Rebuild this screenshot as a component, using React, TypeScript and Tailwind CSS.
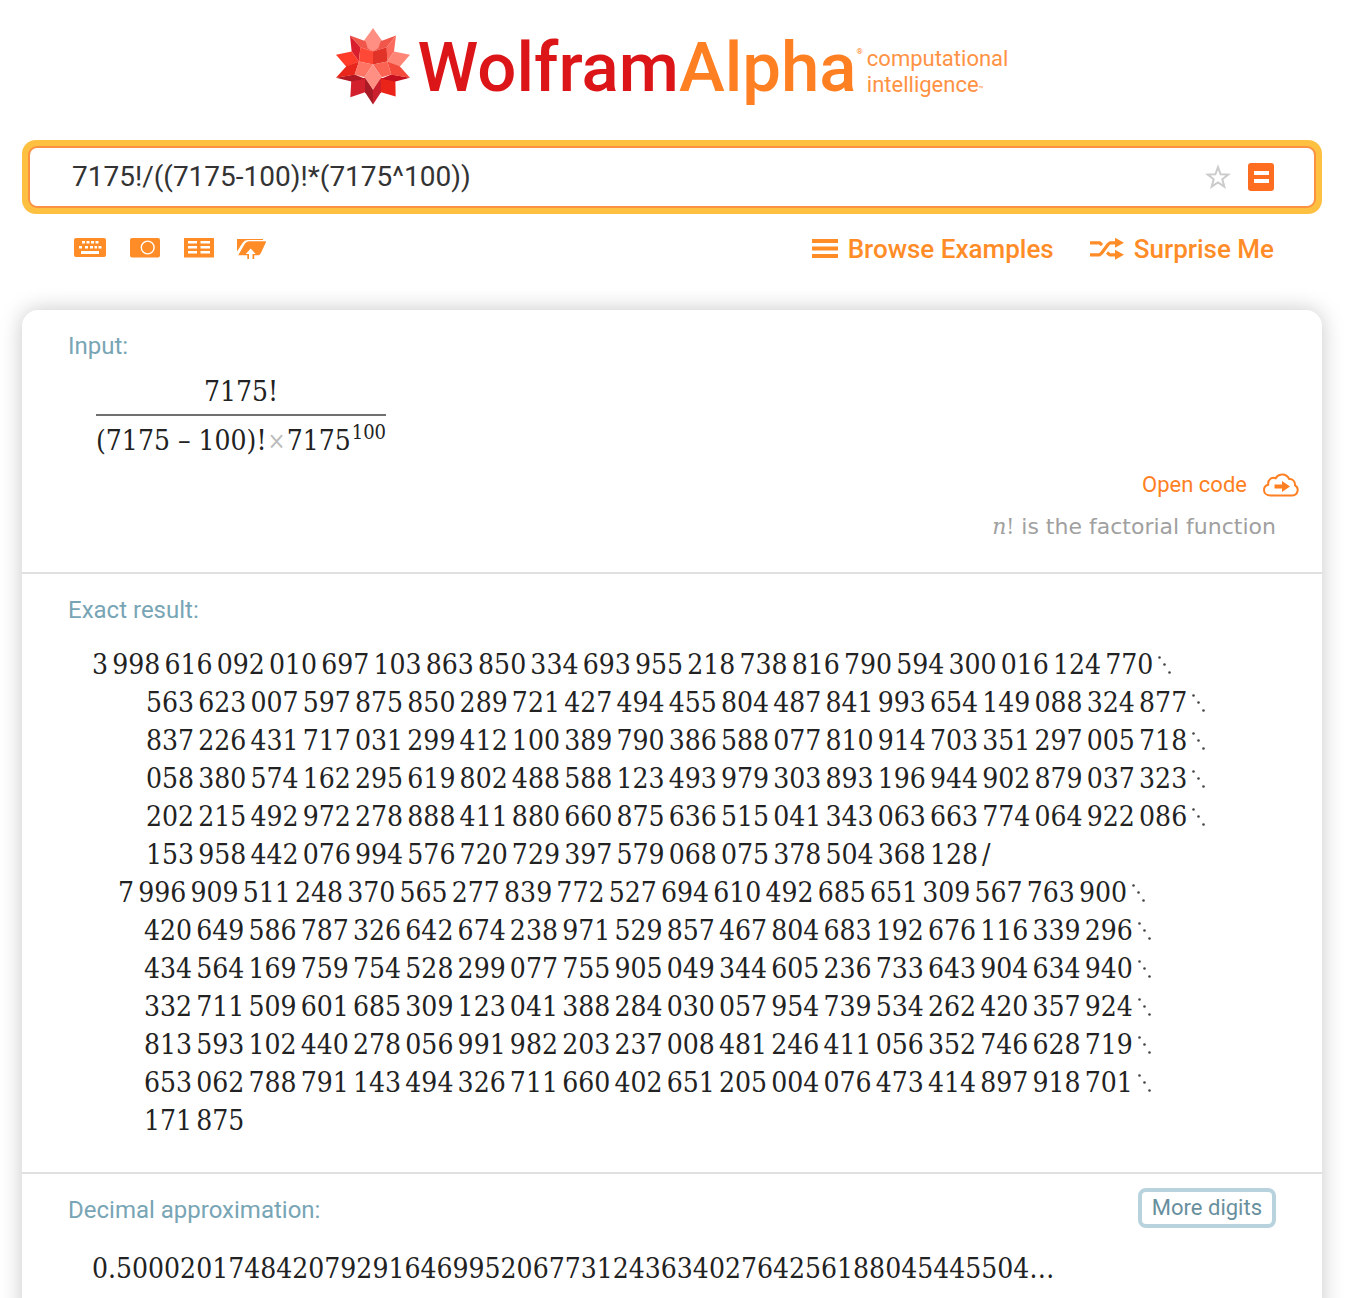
import type { ReactNode } from "react";

const NUMERATOR = [
  "3 998 616 092 010 697 103 863 850 334 693 955 218 738 816 790 594 300 016 124 770",
  "563 623 007 597 875 850 289 721 427 494 455 804 487 841 993 654 149 088 324 877",
  "837 226 431 717 031 299 412 100 389 790 386 588 077 810 914 703 351 297 005 718",
  "058 380 574 162 295 619 802 488 588 123 493 979 303 893 196 944 902 879 037 323",
  "202 215 492 972 278 888 411 880 660 875 636 515 041 343 063 663 774 064 922 086",
  "153 958 442 076 994 576 720 729 397 579 068 075 378 504 368 128",
];

const DENOMINATOR = [
  "7 996 909 511 248 370 565 277 839 772 527 694 610 492 685 651 309 567 763 900",
  "420 649 586 787 326 642 674 238 971 529 857 467 804 683 192 676 116 339 296",
  "434 564 169 759 754 528 299 077 755 905 049 344 605 236 733 643 904 634 940",
  "332 711 509 601 685 309 123 041 388 284 030 057 954 739 534 262 420 357 924",
  "813 593 102 440 278 056 991 982 203 237 008 481 246 411 056 352 746 628 719",
  "653 062 788 791 143 494 326 711 660 402 651 205 004 076 473 414 897 918 701",
  "171 875",
];

const MATH = "font-['DejaVu_Serif_Condensed','DejaVu_Serif',serif] text-[28px] leading-[38px] text-[#222]";

/* Digit groups are set apart by a six-per-em space. */
const grouped = (line: string) => line.replace(/ /g, "\u2006");

function Spikey() {
  return (
    <svg viewBox="48 38 222 230" className="h-[77px] w-[74px] shrink-0" aria-hidden="true">
      <polygon points="159,38 188,78 159,110 130,78" fill="#ff8f83" />
      <polygon points="90,60 137,77 159,108 121,95" fill="#f0564a" />
      <polygon points="90,60 121,95 117,138 95,108" fill="#d91f2d" />
      <polygon points="228,60 182,77 159,108 200,95" fill="#f0564a" />
      <polygon points="228,60 200,95 202,138 222,108" fill="#fb6a5c" />
      <polygon points="159,38 137,77 143,98 159,108 175,98 182,77" fill="#ff8f83" />
      <polygon points="48,118 95,108 117,138 79,154" fill="#ff3b29" />
      <polygon points="270,118 222,108 202,138 239,154" fill="#ff8676" />
      <polygon points="121,95 159,108 159,147 117,138" fill="#ff4836" />
      <polygon points="200,95 159,108 159,147 202,138" fill="#e23328" />
      <polygon points="94,193 135,187 135,230 91,245" fill="#d3202d" />
      <polygon points="226,193 183,187 183,230 227,243" fill="#ea2419" />
      <polygon points="135,184 159,222 159,267 135,230" fill="#a81a26" />
      <polygon points="183,184 159,222 159,267 183,230" fill="#cb1f2e" />
      <polygon points="48,187 104,177 135,190 94,198" fill="#b01823" />
      <polygon points="270,187 214,177 183,190 226,198" fill="#c4101f" />
      <polygon points="48,187 79,152 117,138 104,178" fill="#e9261b" />
      <polygon points="270,187 239,152 202,138 214,178" fill="#f44a3b" />
      <polygon points="117,138 159,147 133,185 104,177" fill="#ff7565" />
      <polygon points="202,138 159,147 185,185 214,177" fill="#fb6353" />
      <polygon points="159,147 133,185 159,222 185,185" fill="#ff8f83" />
    </svg>
  );
}

function Logo() {
  return (
    <a href="#home" className="flex items-start justify-center pt-7">
      <Spikey />
      <span className="ml-2 text-[69px] leading-[80px] font-medium text-[#dc1518]">Wolfram</span>
      <span className="text-[69px] leading-[80px] font-medium text-[#ff7f23]">Alpha</span>
      <span className="mt-4 text-[8px] leading-4 text-[#ff7f23]">®</span>
      <span className="mt-[18px] ml-1 text-[22px] leading-[26px] text-[#ff9243]">
        computational
        <br />
        intelligence<span className="text-[8px]">™</span>
      </span>
    </a>
  );
}

function SearchBox() {
  return (
    <form className="mt-8 rounded-[14px] bg-[#fdc040] p-1.5">
      <div className="flex h-[62px] items-center rounded-[9px] border-2 border-[#fd9142] bg-white pr-10 pl-[42px]">
        <input
          type="text"
          aria-label="Query"
          defaultValue="7175!/((7175-100)!*(7175^100))"
          className="min-w-0 flex-1 bg-transparent text-[28px] leading-9 text-[#333] outline-none"
        />
        <button type="button" aria-label="Add to favorites">
          <svg viewBox="0 0 26 26" className="size-[26px]" fill="none" stroke="#cbcbcb" strokeWidth="2">
            <path d="M13 3.2l2.6 7.1 7.6.3-5.9 4.700 2 7.300L13 18.400l-6.300 4.200 2-7.300L2.800 10.600l7.600-.3z" />
          </svg>
        </button>
        <button type="submit" aria-label="Compute" className="ml-[17px]">
          <svg viewBox="0 0 26 28" className="h-7 w-[26px]">
            <rect width="26" height="28" rx="3" fill="#ff6d20" />
            <path d="M6 8h15v4H6zM6 16h15v4H6z" fill="#fff" />
          </svg>
        </button>
      </div>
    </form>
  );
}

function KeyboardIcon() {
  return (
    <svg viewBox="0 0 32 20" className="h-5 w-8">
      <rect width="32" height="19" rx="2" fill="#ff8c27" />
      <path
        d="M8 3h3v2.500H8zM12.500 3h3v2.500h-3zM17 3h3v2.500h-3zM21.500 3h3v2.500h-3zM5 8h3v2.500H5zM11 8h3v2.500h-3zM16 8h3v2.500h-3zM20.500 8h2.500v2.500h-2.500zM24.500 8h3v2.500h-3zM7 13h18v3H7z"
        fill="#fff"
      />
    </svg>
  );
}

function CameraIcon() {
  return (
    <svg viewBox="0 0 30 20" className="h-5 w-[30px]">
      <rect width="30" height="19.500" rx="2" fill="#ff8c27" />
      <circle cx="17.700" cy="9.500" r="6.400" fill="none" stroke="#fff" strokeWidth="1.400" />
    </svg>
  );
}

function TableIcon() {
  return (
    <svg viewBox="0 0 30 20" className="h-5 w-[30px]">
      <rect width="30" height="19.500" fill="#ff8c27" />
      <path d="M4 3h9v2.500H4zM4 8h9v2.500H4zM4 13h9v2.500H4zM16.500 3h9.500v2.500h-9.500zM16.500 8h9.500v2.500h-9.500zM16.500 13h9.500v2.500h-9.500z" fill="#fff" />
    </svg>
  );
}

function UploadIcon() {
  return (
    <svg viewBox="0 0 30 22" className="h-[22px] w-[30px]">
      <path d="M0 2h26v1H10.500Q7.500 3 5.500 6L0 14.500z" fill="#ff8c27" />
      <path d="M12 4.300h16.200q1.200 0 .6 1.300l-5 10.700q-.9 1.900-2.800 1.900H1.200L7.800 6.800q1.400-2.500 4.200-2.500z" fill="#ff8c27" />
      <path d="M10.300 16h6.900v6h-6.900z" fill="#ff8c27" />
      <path d="M13.700 11.500l5 5.500h-3.200v5h-3.500v-5H8.700z" fill="#fff" />
    </svg>
  );
}

function ShuffleIcon() {
  return (
    <svg viewBox="0 0 34 24" className="h-6 w-[34px]">
      <g fill="none" stroke="#ff8c27" strokeWidth="3.200" strokeLinejoin="round">
        <path d="M0 17.800h9.500l2-1.500 6.700-9 2-1.500H27" />
        <path d="M0 5.800h9.500l2.500 2.200" />
        <path d="M17 15.600l2.700 2.200H27" />
      </g>
      <path d="M25 .8l9 5-9 5zM25 12.800l9 5-9 5z" fill="#ff8c27" />
    </svg>
  );
}

function CloudIcon() {
  return (
    <svg viewBox="0 0 36 24" className="h-6 w-9">
      <path
        d="M7.500 22.500h22a5.500 5.500 0 0 0 2.500-10.200C32.300 8 29 5.500 26.200 6 24.500 2.700 21.500 1.200 18.500 1.500c-3 .2-4.800 1.800-5.800 3.700C9 3.700 4.800 6 5.200 11.800 2.500 12.500 1 14.700 1 17c0 3 2.500 5.500 6.500 5.500z"
        fill="none"
        stroke="#ff7f23"
        strokeWidth="2"
      />
      <path d="M11.500 11.500h7.500V8l8 5.500-8 5.500v-3.500h-7.500z" fill="#ff7f23" />
    </svg>
  );
}

/* Diagonal dots marking a number that continues on the next line. */
function Continuation() {
  return (
    <svg viewBox="0 0 14 20" className="ml-1 h-5 w-3.5" aria-hidden="true">
      <g fill="#444">
        <circle cx="2.500" cy="2.500" r="1.300" />
        <circle cx="7.500" cy="9.500" r="1.300" />
        <circle cx="12.500" cy="17.500" r="1.300" />
      </g>
    </svg>
  );
}

function Toolbar() {
  const link = "flex items-center gap-2.5";
  return (
    <nav className="mt-5 flex h-[30px] items-center pr-12 pl-[52px] text-[26px] leading-[30px] font-medium text-[#ff8c27]">
      <div className="flex items-center pb-0.5">
        <button type="button" aria-label="Extended keyboard"><KeyboardIcon /></button>
        <button type="button" aria-label="Upload image" className="ml-6"><CameraIcon /></button>
        <button type="button" aria-label="Data input" className="ml-6"><TableIcon /></button>
        <button type="button" aria-label="Upload file" className="ml-[23px]"><UploadIcon /></button>
      </div>
      <a href="#examples" className={link + " ml-auto"}>
        <svg viewBox="0 0 26 20" className="h-5 w-[26px]">
          <path d="M0 0h26v4H0zM0 7.500h26v4H0zM0 15h26v4H0z" fill="#ff8c27" />
        </svg>
        Browse Examples
      </a>
      <a href="#random" className={link + " ml-9"}>
        <ShuffleIcon />
        Surprise Me
      </a>
    </nav>
  );
}

function Pod({ title, action, children }: { title: string; action?: ReactNode; children: ReactNode }) {
  return (
    <section className="border-b-2 border-[#e0e0e0] pt-[14px]">
      <div className="flex h-10 items-start justify-between px-[46px]">
        <h2 className="pt-2 text-[24px] leading-7 text-[#78a5b5]">{title}</h2>
        {action}
      </div>
      {children}
    </section>
  );
}

export default function App() {
  return (
    <main className="overflow-hidden bg-white pr-[30px] pl-[22px] font-['Roboto',sans-serif]">
      <Logo />
      <SearchBox />
      <Toolbar />
      <div className="mt-[46px] rounded-t-[16px] bg-white shadow-[0_0_22px_rgba(0,0,0,0.22)]">
        <Pod title="Input:">
          <div className={MATH + " flex pt-[9px] pl-[74px]"}>
            <div className="flex flex-col items-center">
              <div className="pb-[3px]">7175!</div>
              <div className="h-[2px] w-full bg-[#707070]" />
              <div className="flex items-start pt-1.5">
                <span>(7175 – 100)!</span>
                <span className="px-px text-[24px] text-[#bbb]">×</span>
                <span>7175</span>
                <sup className="top-0 ml-px text-[20px] leading-5">100</sup>
              </div>
            </div>
          </div>
          <div className="flex flex-col items-end pt-[11px] pb-[29px]">
            <a href="#code" className="flex items-center gap-4 pr-[23px] text-[22px] leading-7 text-[#ff7f23]">
              Open code
              <CloudIcon />
            </a>
            <p className="mt-3 pr-[46px] font-['DejaVu_Sans',sans-serif] text-[22px] leading-8 text-[#a0a0a0]">
              <i className="font-['DejaVu_Serif',serif]">n</i>
              <span className="font-['DejaVu_Serif_Condensed',serif]">!</span> is the factorial function
            </p>
          </div>
        </Pod>
        <Pod title="Exact result:">
          <div className={MATH + " overflow-hidden pt-[18px] pb-8 pl-[70px] whitespace-nowrap"}>
            {NUMERATOR.map((line, i) => (
              <div key={line} className={i === 0 ? "flex items-center" : "flex items-center pl-[54px]"}>
                <span>{grouped(line)}</span>
                {i < NUMERATOR.length - 1 ? <Continuation /> : <span className="ml-1">/</span>}
              </div>
            ))}
            {DENOMINATOR.map((line, i) => (
              <div key={line} className={i === 0 ? "flex items-center pl-[26px]" : "flex items-center pl-[52px]"}>
                <span>{grouped(line)}</span>
                {i < DENOMINATOR.length - 1 && <Continuation />}
              </div>
            ))}
          </div>
        </Pod>
        <Pod
          title="Decimal approximation:"
          action={
            <button type="button" className="h-10 rounded-lg border-4 border-[#b8d3dd] px-2.5 text-[22px] leading-7 text-[#688f9d]">
              More digits
            </button>
          }
        >
          <p className={MATH + " pt-[22px] pb-8 pl-[70px]"}>0.500020174842079291646995206773124363402764256188045445504…</p>
        </Pod>
      </div>
    </main>
  );
}
